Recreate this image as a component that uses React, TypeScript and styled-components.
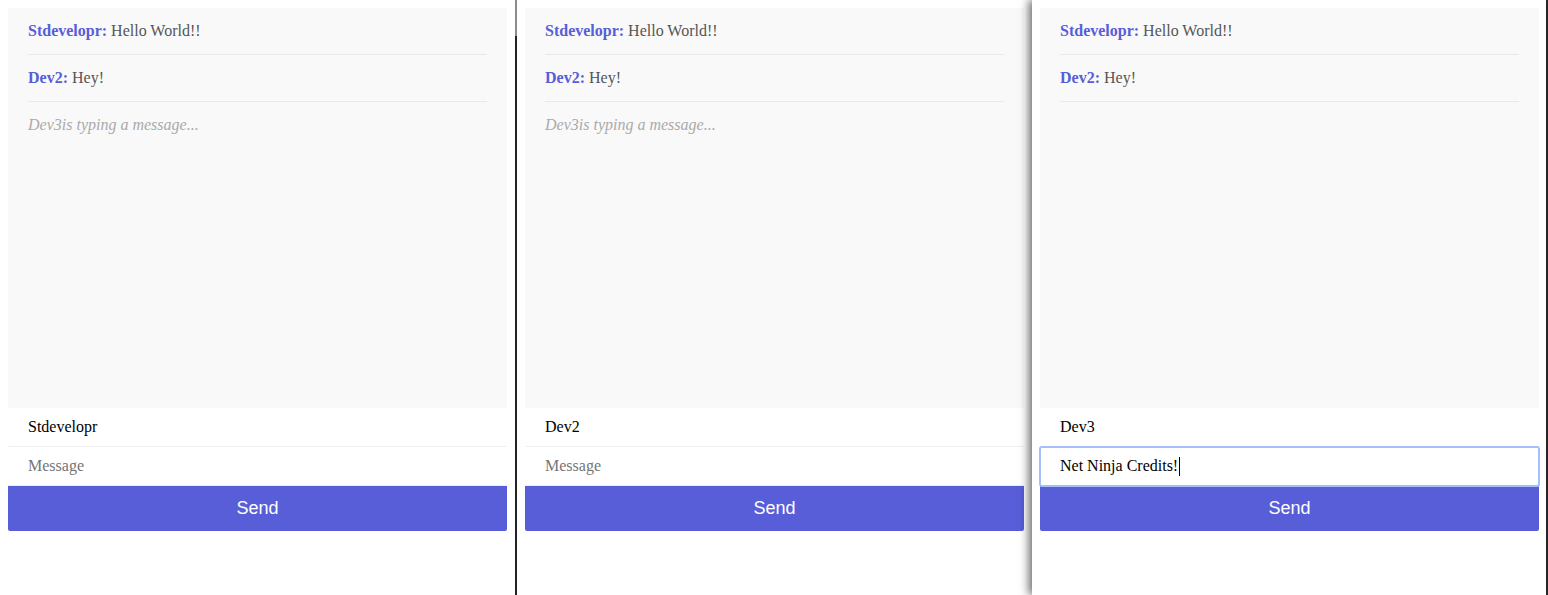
import React from "react";
import styled, { createGlobalStyle, css } from "styled-components";

const Global = createGlobalStyle`
  html, body { margin: 0; padding: 0; background: #fff; }
  body { width: 1548px; height: 595px; overflow: hidden; }
  #root { height: 100%; }
`;

const Desktop = styled.div`
  display: flex;
  height: 595px;
  width: 1548px;
  background: #1e1e1e;
`;

const BrowserWindow = styled.div<{ $w: number; $shadow?: boolean }>`
  width: ${(p) => p.$w}px;
  flex: none;
  box-sizing: border-box;
  padding: 8px;
  background: #fff;
  position: relative;
  ${(p) =>
    p.$shadow &&
    css`
      box-shadow: -3px 0 9px rgba(0, 0, 0, 0.6);
      z-index: 1;
    `}
`;

const Divider = styled.div<{ $w: number }>`
  width: ${(p) => p.$w}px;
  flex: none;
  background: linear-gradient(to bottom, #8c8c8c 0 36px, #232323 36px);
`;

const EdgeLine = styled.div`
  width: 2px;
  flex: none;
  background: #2a2a2a;
`;

const Chat = styled.div`
  width: 499px;
  font-family: "Liberation Serif", "Times New Roman", serif;
  font-size: 16px;
`;

const ChatWindow = styled.div`
  height: 400px;
  overflow: hidden;
  background: #f9f9f9;
`;

const Message = styled.p`
  margin: 0 20px;
  padding: 14px 0;
  border-bottom: 1px solid #e9e9e9;
  color: #555;
  line-height: 18px;
`;

const Author = styled.strong`
  color: #575ed8;
`;

const Feedback = styled.p`
  margin: 0 20px;
  padding: 14px 0;
  color: #aaa;
  line-height: 18px;
  font-style: italic;
`;

const FieldWrap = styled.div`
  position: relative;
`;

const Field = styled.input<{ $focused?: boolean }>`
  display: block;
  width: 100%;
  box-sizing: border-box;
  padding: 10px 20px;
  border: 0;
  border-bottom: 1px solid #eee;
  background: #fff;
  font-family: "Liberation Serif", "Times New Roman", serif;
  font-size: 16px;
  line-height: 18px;
  height: 39px;
  color: #000;
  outline: none;
  border-radius: 2px;
  &::placeholder {
    color: #757575;
  }
  ${(p) =>
    p.$focused &&
    css`
      outline: 2px solid #a3c1f6;
      outline-offset: -1px;
    `}
`;

const Caret = styled.span`
  position: absolute;
  left: 139px;
  top: 10px;
  width: 1px;
  height: 19px;
  background: #000;
`;

const SendButton = styled.button`
  display: block;
  width: 100%;
  border: 0;
  padding: 12px 0;
  background: #575ed8;
  color: #fff;
  font-family: "Liberation Sans", Arial, sans-serif;
  font-size: 18px;
  line-height: 21px;
  border-radius: 0 0 2px 2px;
`;

type Props = { handle: string; draft?: string; typing: boolean; focused?: boolean };

const ChatApp: React.FC<Props> = ({ handle, draft, typing, focused }) => (
  <Chat>
    <ChatWindow>
      <div>
        <Message>
          <Author>Stdevelopr:</Author> Hello World!!
        </Message>
        <Message>
          <Author>Dev2:</Author> Hey!
        </Message>
      </div>
      {typing && <Feedback>Dev3is typing a message...</Feedback>}
    </ChatWindow>
    <Field type="text" placeholder="Handle" value={handle} readOnly />
    <FieldWrap>
      <Field type="text" placeholder="Message" value={draft ?? ""} readOnly $focused={focused} />
      {focused && <Caret />}
    </FieldWrap>
    <SendButton>Send</SendButton>
  </Chat>
);

export default function App() {
  return (
    <>
      <Global />
      <Desktop>
        <BrowserWindow $w={515}>
          <ChatApp handle="Stdevelopr" typing />
        </BrowserWindow>
        <Divider $w={2} />
        <BrowserWindow $w={515}>
          <ChatApp handle="Dev2" typing />
        </BrowserWindow>
        <BrowserWindow $w={514} $shadow>
          <ChatApp handle="Dev3" draft="Net Ninja Credits!" typing={false} focused />
        </BrowserWindow>
        <EdgeLine />
      </Desktop>
    </>
  );
}
